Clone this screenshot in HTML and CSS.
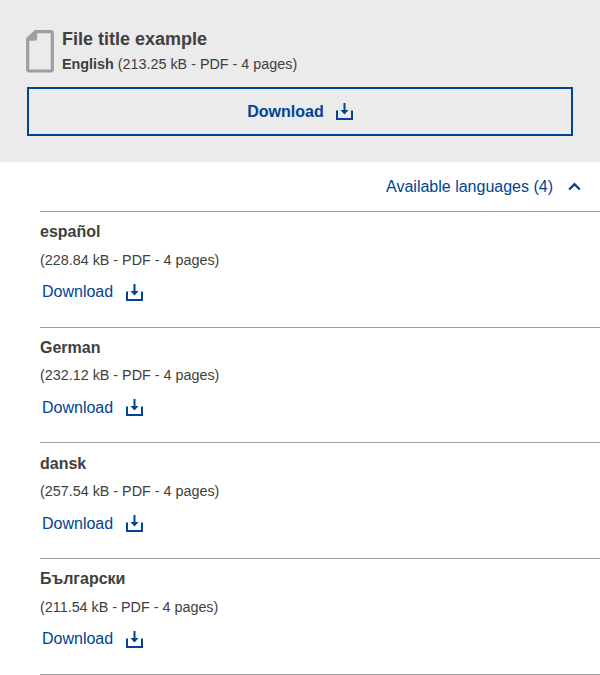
FILE: index.html
```
<!DOCTYPE html>
<html lang="en">
<head>
<meta charset="utf-8">
<title>File download</title>
<link rel="stylesheet" href="styles.css">
</head>
<body>
<svg width="0" height="0" class="defs" aria-hidden="true">
  <symbol id="download" viewBox="0 0 17 17">
    <path d="M1 7.500v8.500h15V7.500" fill="none" stroke="currentColor" stroke-width="2"/>
    <path d="M7.500 0h2v7h3.100L8.500 11.500 4.400 7h3.100z" fill="currentColor"/>
  </symbol>
</svg>
<section class="file">
  <div class="file-head">
    <svg class="doc" viewBox="0 0 28 43"><path d="M9.5 1.7H24.5Q26.3 1.7 26.3 3.5V39.2Q26.3 41 24.5 41H3.5Q1.7 41 1.7 39.2V9z" fill="none" stroke="#9f9f9f" stroke-width="3.2"/><path d="M1.5 8.5L9 1h2.2v6.5Q11.200 10.800 8 10.800H1.500z" fill="#9f9f9f"/></svg>
    <div>
      <h1>File title example</h1>
      <p class="info"><strong>English</strong> (213.25 kB - PDF - 4 pages)</p>
    </div>
  </div>
  <a class="button">Download<svg class="icon"><use href="#download"/></svg></a>
</section>
<div class="toggle">Available languages (4)<svg class="chevron" viewBox="0 0 13 9"><path d="M1.200 7.500l5.300-5.300 5.300 5.300" fill="none" stroke="currentColor" stroke-width="2.300"/></svg></div>
<ul class="languages">
  <li><h2>español</h2><p>(228.84 kB - PDF - 4 pages)</p><a class="link">Download<svg class="icon"><use href="#download"/></svg></a></li>
  <li><h2>German</h2><p>(232.12 kB - PDF - 4 pages)</p><a class="link">Download<svg class="icon"><use href="#download"/></svg></a></li>
  <li><h2>dansk</h2><p>(257.54 kB - PDF - 4 pages)</p><a class="link">Download<svg class="icon"><use href="#download"/></svg></a></li>
  <li><h2>Български</h2><p>(211.54 kB - PDF - 4 pages)</p><a class="link">Download<svg class="icon"><use href="#download"/></svg></a></li>
</ul>
</body>
</html>
```
FILE: styles.css
```
* { box-sizing: border-box; }
body { margin: 0; height: 675px; overflow: hidden; background: #fff; color: #404040; font-family: "Liberation Sans", Arial, sans-serif; font-size: 16px; }
h1, h2, p, ul { margin: 0; padding: 0; }
.defs { display: none; }
.file { height: 162px; padding: 27px 27px 26px; background: #ebebeb; }
.file-head { display: flex; height: 60px; }
.doc { width: 28px; height: 43px; margin: 3px 8px 0 -1px; }
h1 { font-size: 18px; line-height: 24px; }
.info { margin-top: 2px; font-size: 14.350px; line-height: 22px; }
.button { display: flex; align-items: center; justify-content: center; height: 49px; border: 2px solid #004494; color: #004494; font-weight: bold; }
.icon { width: 17px; height: 17px; margin-left: 12px; }
.toggle { display: flex; align-items: center; justify-content: flex-end; height: 49px; padding-right: 19.500px; color: #004494; }
.chevron { width: 13px; height: 9px; margin-left: 14.500px; }
.languages { margin-left: 40px; list-style: none; border-bottom: 1px solid #9f9f9f; }
.languages li { height: 115.650px; padding-top: 9.300px; border-top: 1px solid #9f9f9f; }
.languages h2 { font-size: 16px; line-height: 22px; }
.languages p { margin-top: 5.500px; font-size: 14.350px; line-height: 22px; }
.link { display: flex; align-items: center; height: 22px; margin: 10.450px 0 0 2px; color: #004494; }
.link .icon { margin-left: 12.400px; }
```
